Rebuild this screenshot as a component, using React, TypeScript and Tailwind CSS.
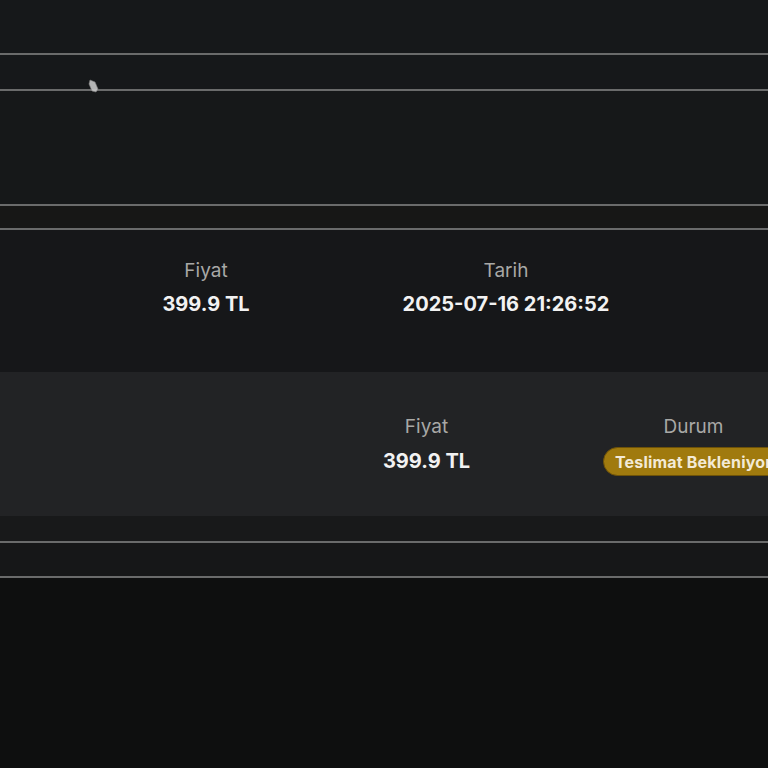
import React from "react";

const font = { fontFamily: "Inter, 'Noto Sans', sans-serif" };

function Line() {
  return <div className="h-[2px] w-full shrink-0 bg-[#6a6b6b]" />;
}

export default function App() {
  return (
    <div className="relative flex h-[768px] w-full flex-col overflow-hidden bg-[#0e0f0f]" style={font}>
      <div className="h-[53px] shrink-0 bg-[#16181a]" />
      <Line />
      <div className="h-[34px] shrink-0 bg-[#16181a]" />
      <Line />
      <div className="h-[113px] shrink-0 bg-[#161819]" />
      <Line />
      <div className="h-[22px] shrink-0 bg-[#171716]" />
      <Line />
      <div className="flex h-[142px] shrink-0 bg-[#161719] pl-[56px] pt-[27px]">
        <div className="flex w-[300px] shrink-0 flex-col items-center">
          <div className="text-[19px] leading-[28px] text-[#a8a8a6]">Fiyat</div>
          <div className="mt-[5px] text-[20px] font-bold leading-[28px] text-[#f2f2f2]">399.9 TL</div>
        </div>
        <div className="flex w-[300px] shrink-0 flex-col items-center">
          <div className="text-[19px] leading-[28px] text-[#a8a8a6]">Tarih</div>
          <div className="mt-[5px] text-[20px] font-bold leading-[28px] text-[#f2f2f2]">2025-07-16 21:26:52</div>
        </div>
      </div>
      <div className="flex h-[144px] shrink-0 bg-[#222325] pl-[293px] pt-[41px]">
        <div className="flex w-[267px] shrink-0 flex-col items-center">
          <div className="text-[19px] leading-[28px] text-[#a8a8a6]">Fiyat</div>
          <div className="mt-[6px] text-[20px] font-bold leading-[28px] text-[#f2f2f2]">399.9 TL</div>
        </div>
        <div className="flex w-[267px] shrink-0 flex-col items-center">
          <div className="text-[19px] leading-[28px] text-[#a8a8a6]">Durum</div>
          <div className="mt-[6px] flex h-[29px] items-center whitespace-nowrap rounded-full border border-[#6e5208] bg-[#a07a0e] px-[11px] text-[16px] font-bold tracking-[0.2px] text-[#f3ead6]">
            Teslimat Bekleniyor
          </div>
        </div>
      </div>
      <div className="h-[25px] shrink-0 bg-[#18191a]" />
      <Line />
      <div className="h-[33px] shrink-0 bg-[#161718]" />
      <Line />
      <div className="flex-1 bg-[#0e0f0f]" />
      <svg className="absolute left-[86px] top-[76px]" width="16" height="20" viewBox="0 0 16 20">
        <path d="M4 4 L9 6 L12 13 L10 16 L6 15 L3 8 Z" fill="#c6c6c6" stroke="#888" strokeWidth="0.6" opacity="0.9" />
      </svg>
    </div>
  );
}
